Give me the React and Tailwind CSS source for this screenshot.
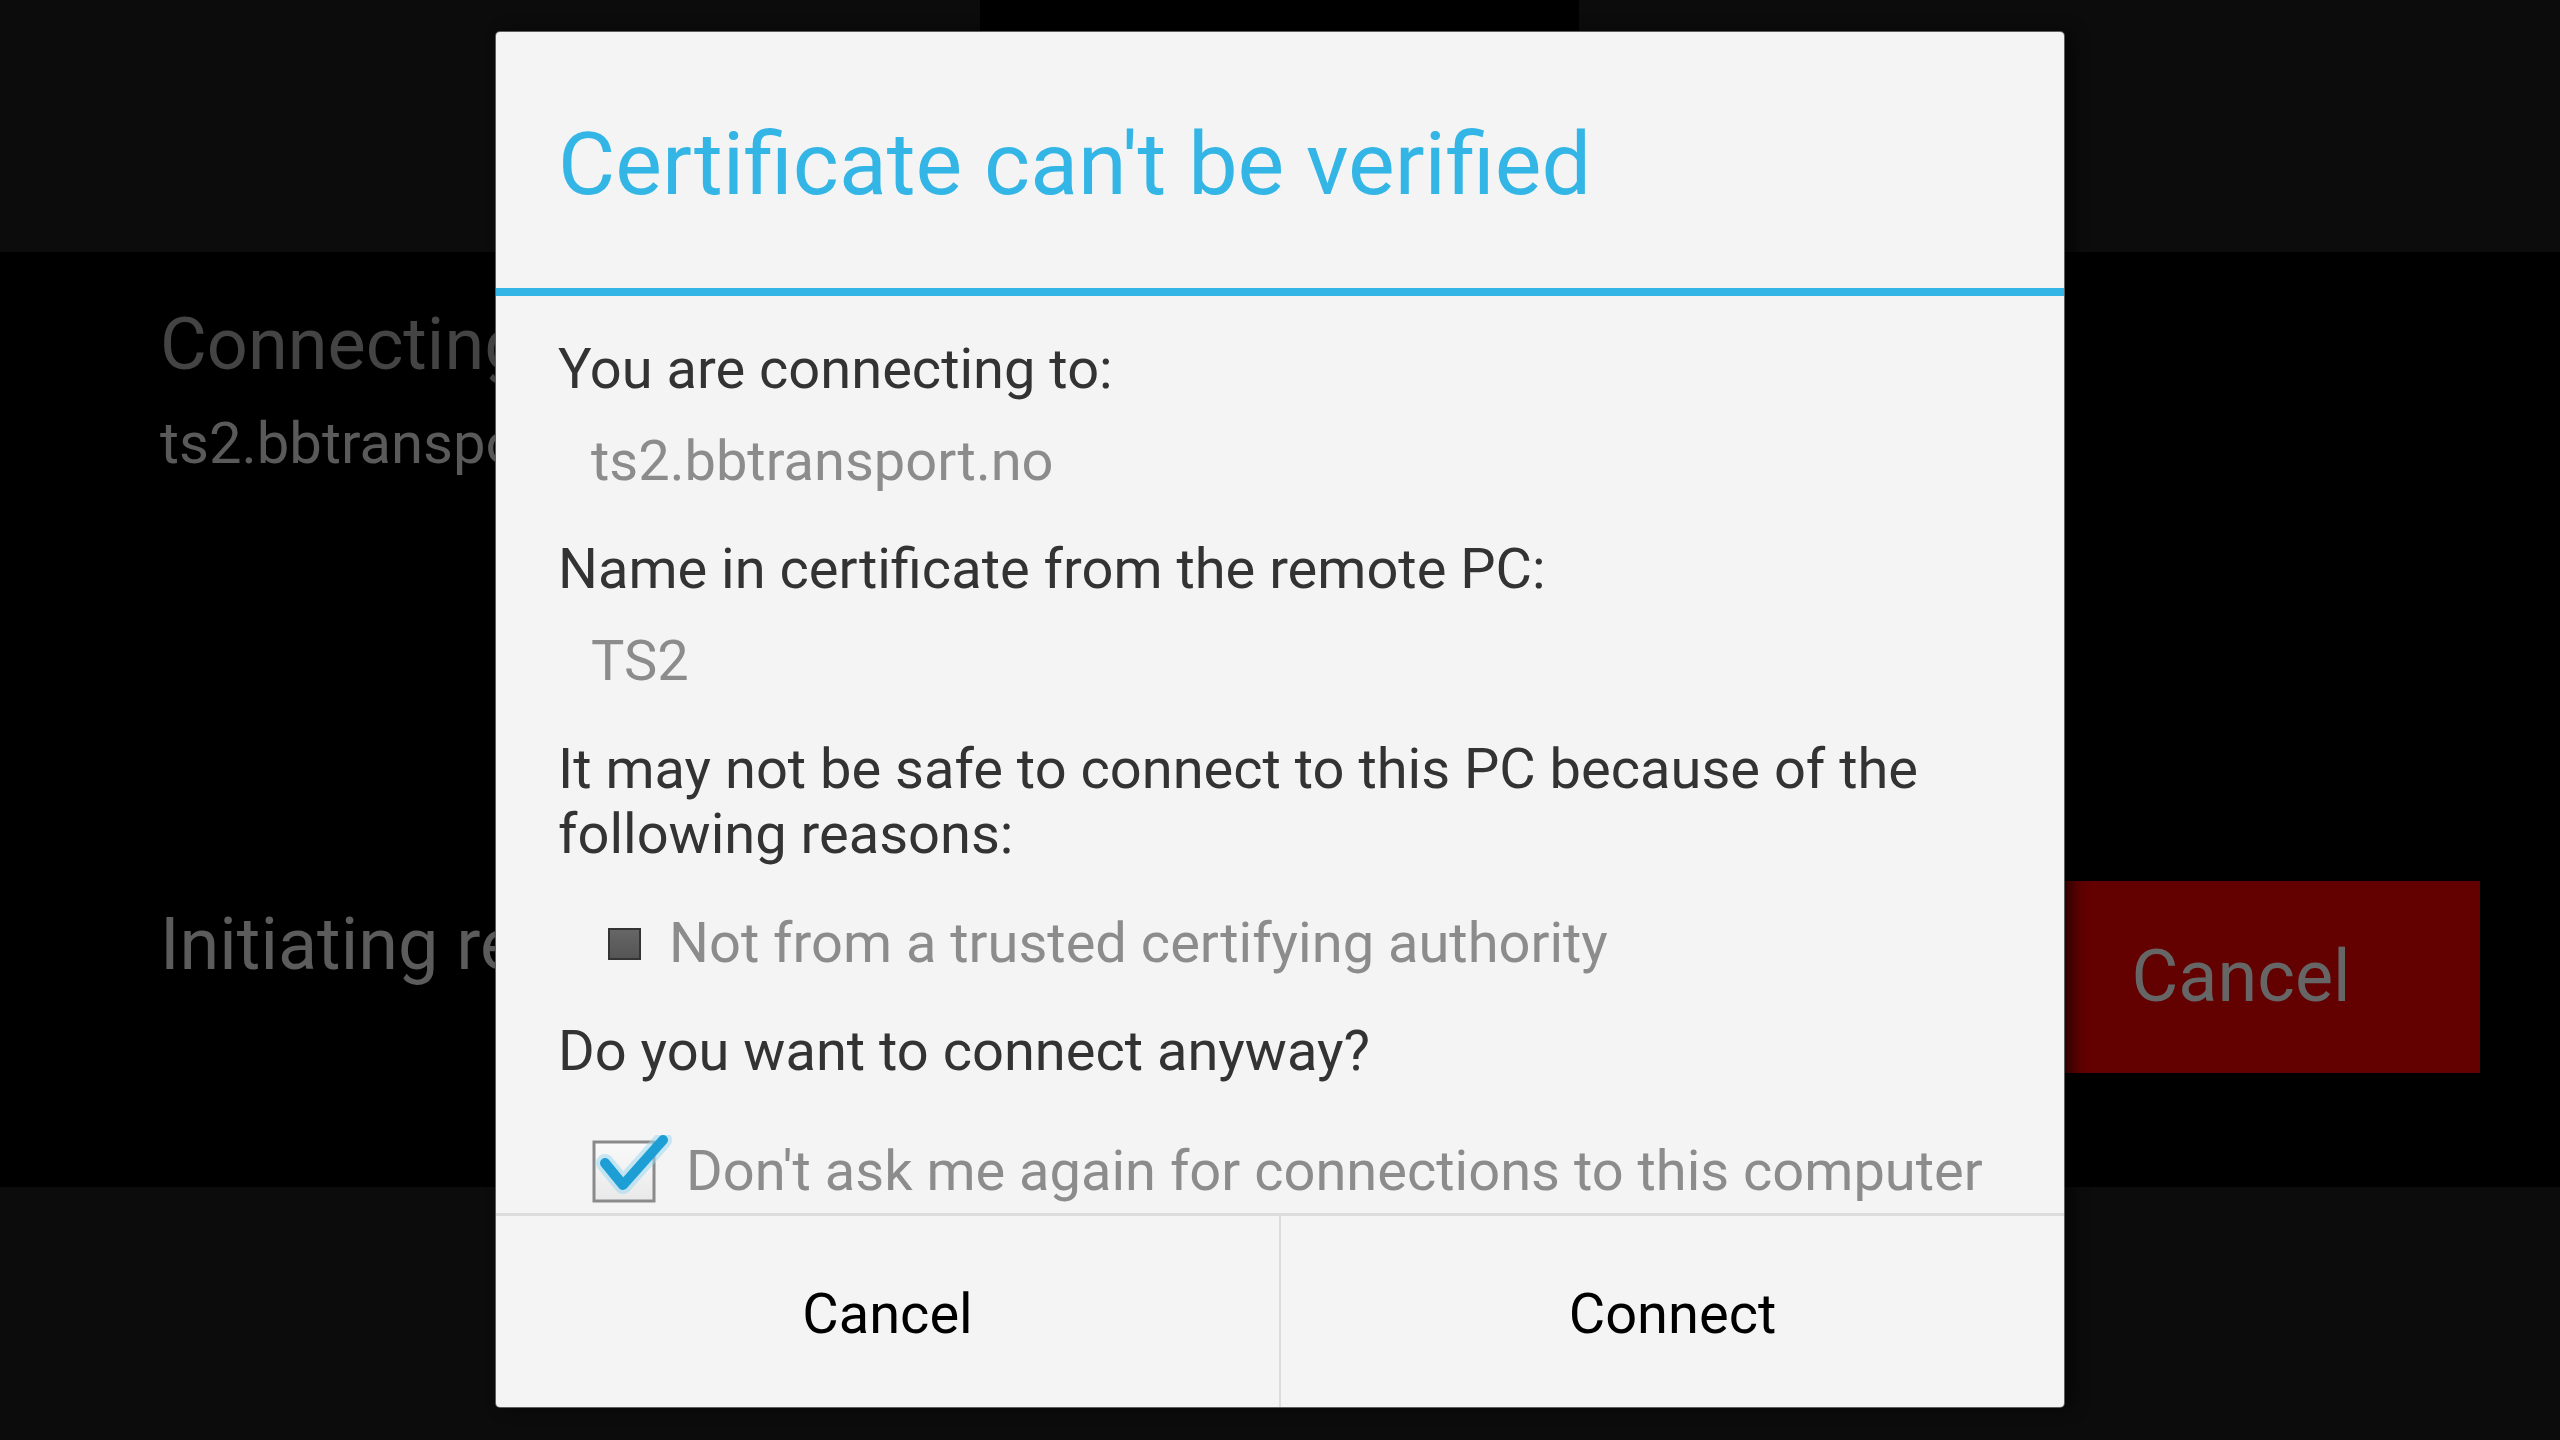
import React from "react";

function CheckIcon() {
  return (
    <svg width="80" height="72" viewBox="0 0 80 72" className="shrink-0">
      <defs>
        <linearGradient id="boxFill" x1="0" y1="0" x2="0" y2="1">
          <stop offset="0" stopColor="#fafafa" />
          <stop offset="1" stopColor="#e9e9e9" />
        </linearGradient>
      </defs>
      <rect x="2" y="7" width="60" height="59" fill="url(#boxFill)" stroke="#8a8a8a" strokeWidth="3" />
      <path d="M13 28 L31 50 L71 5" fill="none" stroke="#9fd8f0" strokeOpacity="0.55" strokeWidth="18" strokeLinecap="round" strokeLinejoin="round" />
      <path d="M13 28 L31 50 L71 5" fill="none" stroke="#1d9fd6" strokeWidth="10" strokeLinecap="round" strokeLinejoin="round" />
    </svg>
  );
}

function Bullet() {
  return (
    <div className="w-[33px] h-[32px] shrink-0 border-2 border-[#343434] bg-gradient-to-b from-[#666666] to-[#555555]" />
  );
}

export default function App() {
  return (
    <div className="relative w-[2560px] h-[1440px] overflow-hidden bg-black font-[Roboto,sans-serif]">
      {/* app behind the dialog */}
      <div className="flex flex-col h-full">
        <div className="h-[252px] bg-[#0c0c0c] flex">
          <div className="ml-[980px] w-[599px] h-full bg-black" />
        </div>

        <div className="h-[935px] bg-black flex">
          <div className="ml-[160px] w-[336px] overflow-hidden flex flex-col whitespace-nowrap">
            <div className="mt-[57px] text-[72px] leading-none text-[#444444]">Connecting to</div>
            <div className="mt-[33px] text-[58px] leading-none text-[#5a5a5a]">ts2.bbtransport.no</div>
            <div className="mt-[437px] text-[72px] leading-none text-[#5c5c5c]">Initiating remote connection</div>
          </div>
          <div className="ml-auto mr-[80px] mt-[629px] w-[478px] h-[192px] bg-[#630000] flex items-center justify-center">
            <span className="text-[72px] leading-none text-[#666666]">Cancel</span>
          </div>
        </div>

        <div className="flex-1 bg-[#0c0c0c]" />
      </div>

      {/* dialog */}
      <div className="absolute left-[496px] top-[32px] w-[1568px] h-[1375px] bg-[#f4f4f4] rounded-[4px] shadow-[0_0_0_1px_#5e5e5e,8px_0_16px_rgba(0,0,0,0.6)] flex flex-col overflow-hidden">
        <div className="h-[256px] shrink-0 pl-[62px] pt-[88px]">
          <div className="text-[88px] leading-[88px] text-[#33b5e5] whitespace-nowrap">Certificate can't be verified</div>
        </div>
        <div className="h-[8px] shrink-0 bg-[#33b5e5]" />

        <div className="flex-1 pl-[62px] pr-[60px] pt-[41px] text-[56px] leading-[65px] text-[#333333]">
          <div>You are connecting to:</div>
          <div className="mt-[27px] pl-[33px] text-[#8c8c8c]">ts2.bbtransport.no</div>
          <div className="mt-[43px]">Name in certificate from the remote PC:</div>
          <div className="mt-[27px] pl-[33px] text-[#8c8c8c]">TS2</div>
          <div className="mt-[43px] w-[1400px]">It may not be safe to connect to this PC because of the following reasons:</div>
          <div className="mt-[44px] pl-[50px] flex items-center gap-[28px] text-[#8c8c8c]">
            <Bullet />
            <span>Not from a trusted certifying authority</span>
          </div>
          <div className="mt-[43px]">Do you want to connect anyway?</div>
          <div className="mt-[51px] pl-[34px] flex items-center gap-[14px] text-[#8c8c8c] whitespace-nowrap">
            <CheckIcon />
            <span>Don't ask me again for connections to this computer</span>
          </div>
        </div>

        <div className="h-[194px] shrink-0 border-t-[3px] border-[#dcdcdc] flex text-[56px] text-black">
          <div className="flex-1 flex items-center justify-center pt-[5px]">Cancel</div>
          <div className="flex-1 flex items-center justify-center pt-[5px] border-l-2 border-[#dddddd]">Connect</div>
        </div>
      </div>
    </div>
  );
}
